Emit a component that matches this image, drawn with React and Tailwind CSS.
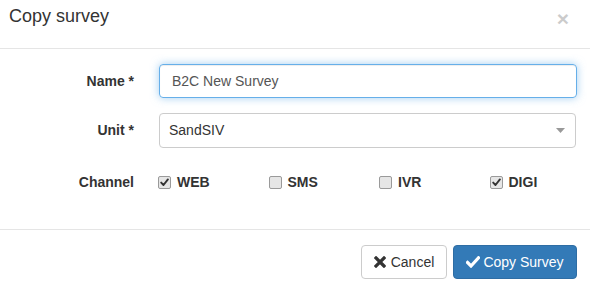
import React from "react";

function Check({ checked }) {
  return (
    <span className="w-[13px] h-[13px] rounded-[2px] border border-[#9a9a9a] bg-[#e6e6e6] flex items-center justify-center shrink-0">
      {checked && (
        <svg width="9" height="9" viewBox="0 0 9 9">
          <path d="M1.2 4.6 L3.5 7 L7.9 1.4" fill="none" stroke="#333" strokeWidth="1.9" strokeLinecap="round" strokeLinejoin="round" />
        </svg>
      )}
    </span>
  );
}

function Channel({ label, checked }) {
  return (
    <div className="flex items-center">
      <Check checked={checked} />
      <span className="ml-[6px] font-bold text-[14px] text-[#333] leading-[20px]">{label}</span>
    </div>
  );
}

export default function App() {
  return (
    <div className="w-[590px] h-[290px] bg-white overflow-hidden" style={{ fontFamily: '"Liberation Sans", Arial, sans-serif' }}>
      <div className="h-[49px] border-b border-[#e5e5e5] flex items-start justify-between pl-[9px] pr-[21px]">
        <h4 className="text-[18px] leading-[26px] text-[#333] mt-[3px]">Copy survey</h4>
        <span className="text-[21px] font-bold text-black opacity-20 leading-[21px] mt-[8px]">×</span>
      </div>
      <div className="h-[180px] pt-[15px] pr-[13px]">
        <div className="grid grid-cols-[134px_418px] gap-x-[25px] gap-y-[15px]">
          <label className="text-right font-bold text-[14px] text-[#333] leading-[20px] pt-[7px]">Name *</label>
          <div className="h-[34px] rounded-[4px] border border-[#66afe9] flex items-center pl-[12px] text-[14px] text-[#555] shadow-[inset_0_1px_1px_rgba(0,0,0,0.075),0_0_8px_rgba(102,175,233,0.6)]">
            B2C New Survey
          </div>
          <label className="text-right font-bold text-[14px] text-[#333] leading-[20px] pt-[7px]">Unit *</label>
          <div className="h-[35px] rounded-[4px] border border-[#ccc] flex items-center justify-between pl-[9px] pr-[10px] mr-[1px] text-[14px] text-[#333]">
            <span>SandSIV</span>
            <svg width="9" height="5" viewBox="0 0 9 5">
              <path d="M0 0 L9 0 L4.5 5 Z" fill="#999" />
            </svg>
          </div>
          <label className="text-right font-bold text-[14px] text-[#333] leading-[20px] pt-[9px]">Channel</label>
          <div className="grid grid-cols-4 -ml-[1px] w-[442px] pt-[9px]">
            <Channel label="WEB" checked />
            <Channel label="SMS" />
            <Channel label="IVR" />
            <Channel label="DIGI" checked />
          </div>
        </div>
      </div>
      <div className="border-t border-[#e5e5e5] pt-[15px] pr-[13px] flex justify-end gap-[6px]">
        <button className="h-[34px] w-[86px] rounded-[4px] border border-[#ccc] bg-white text-[#333] text-[14px] flex items-center justify-center gap-[5px]">
          <svg width="12" height="12" viewBox="0 0 12 12">
            <path d="M2 2 L10 10 M10 2 L2 10" stroke="#333" strokeWidth="3.2" strokeLinecap="square" />
          </svg>
          <span>Cancel</span>
        </button>
        <button className="h-[34px] w-[124px] rounded-[4px] border border-[#2e6da4] bg-[#337ab7] text-white text-[14px] flex items-center justify-center gap-[3px]">
          <svg width="14" height="12" viewBox="0 0 14 12">
            <path d="M1.5 6.5 L5 10 L12.5 1.8" fill="none" stroke="#fff" strokeWidth="3.2" strokeLinecap="square" />
          </svg>
          <span>Copy Survey</span>
        </button>
      </div>
    </div>
  );
}
